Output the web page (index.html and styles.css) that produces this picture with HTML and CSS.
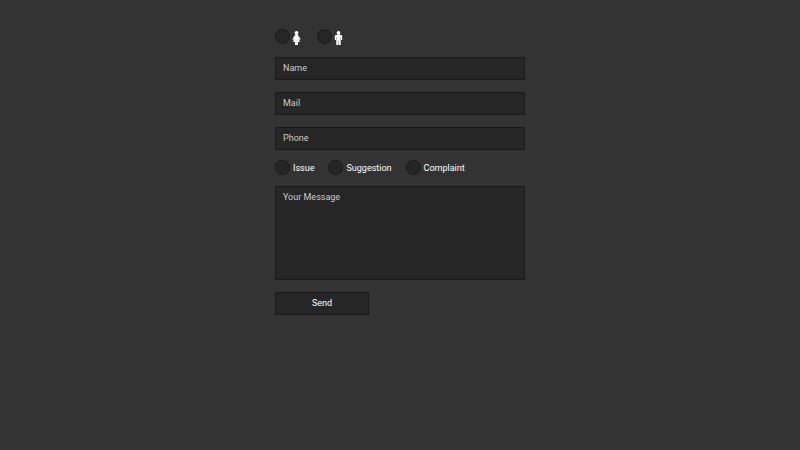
FILE: index.html
```
<!DOCTYPE html>
<html lang="en">
<head>
  <meta charset="UTF-8">
  <meta name="viewport" content="width=device-width, initial-scale=1.0">
  <title>Contact Form</title>
  <link rel="stylesheet" href="styles.css">
</head>
<body>
  <form class="contact-form">
    <div class="radio-group gender">
      <input type="radio" name="gender" id="female" value="female">
      <label for="female" aria-label="Female">
        <svg class="icon" viewBox="0 0 9 14" aria-hidden="true">
          <circle cx="4.5" cy="2" r="1.9"/>
          <path d="M3 4h3L8.600 8.300 7.700 9 6.200 7.200 8 11H6v3H3v-3H1L2.800 7.200 1.300 9 .4 8.300z"/>
        </svg>
      </label>
      <input type="radio" name="gender" id="male" value="male">
      <label for="male" aria-label="Male">
        <svg class="icon" viewBox="0 0 9 14" aria-hidden="true">
          <circle cx="4.500" cy="2" r="1.900"/>
          <path d="M2 4h5q1.200 0 1.200 1.200V9H7V6h-.3v8h-2V9.500h-.4V14h-2V6H2v3H.8V5.200Q.8 4 2 4z"/>
        </svg>
      </label>
    </div>

    <input class="field" type="text" name="name" placeholder="Name" aria-label="Name">
    <input class="field" type="email" name="mail" placeholder="Mail" aria-label="Mail">
    <input class="field" type="tel" name="phone" placeholder="Phone" aria-label="Phone">

    <div class="radio-group topic">
      <input type="radio" name="topic" id="issue" value="issue">
      <label for="issue">Issue</label>
      <input type="radio" name="topic" id="suggestion" value="suggestion">
      <label for="suggestion">Suggestion</label>
      <input type="radio" name="topic" id="complaint" value="complaint">
      <label for="complaint">Complaint</label>
    </div>

    <textarea class="field message" name="message" placeholder="Your Message" aria-label="Your Message"></textarea>
    <button type="submit">Send</button>
  </form>
</body>
</html>
```
FILE: styles.css
```
* {
  box-sizing: border-box;
}

body {
  margin: 0;
  padding: 29px 20px;
  background: #333;
  color: #fff;
  font-family: Roboto, sans-serif;
  font-size: 9px;
  line-height: 12px;
}

.contact-form {
  max-width: 250px;
  margin: 0 auto;
}

/* Text fields */
.field,
button {
  display: block;
  width: 100%;
  height: 23px;
  margin: 0 0 12px;
  padding: 4px 7px 6px;
  background: #262626;
  border: 1px solid #1a1a1a;
  border-radius: 0;
  color: #fff;
  font: inherit;
  outline: none;
}

.field::placeholder {
  color: #ccc;
  opacity: 1;
}

.message {
  height: 94px;
  resize: none;
}

/* Radio buttons */
.radio-group {
  display: flex;
  align-items: center;
  height: 15px;
}

.gender {
  margin-bottom: 13px;
}

.topic {
  margin: -2px 0 11px;
}

.radio-group input {
  appearance: none;
  width: 15px;
  height: 15px;
  margin: 0 3px 0 0;
  background: #262626;
  border: 1px solid #1a1a1a;
  border-radius: 50%;
}

.radio-group input:checked {
  background: #999;
}

.radio-group label {
  margin-right: 14px;
}

.gender input {
  margin-right: 2px;
}

.gender label {
  margin-right: 16px;
  padding-top: 3px;
}

.icon {
  display: block;
  width: 9px;
  height: 14px;
  fill: #fff;
}

/* Send button */
button {
  width: 94px;
  cursor: pointer;
}

button:hover {
  background: #1a1a1a;
}
```
